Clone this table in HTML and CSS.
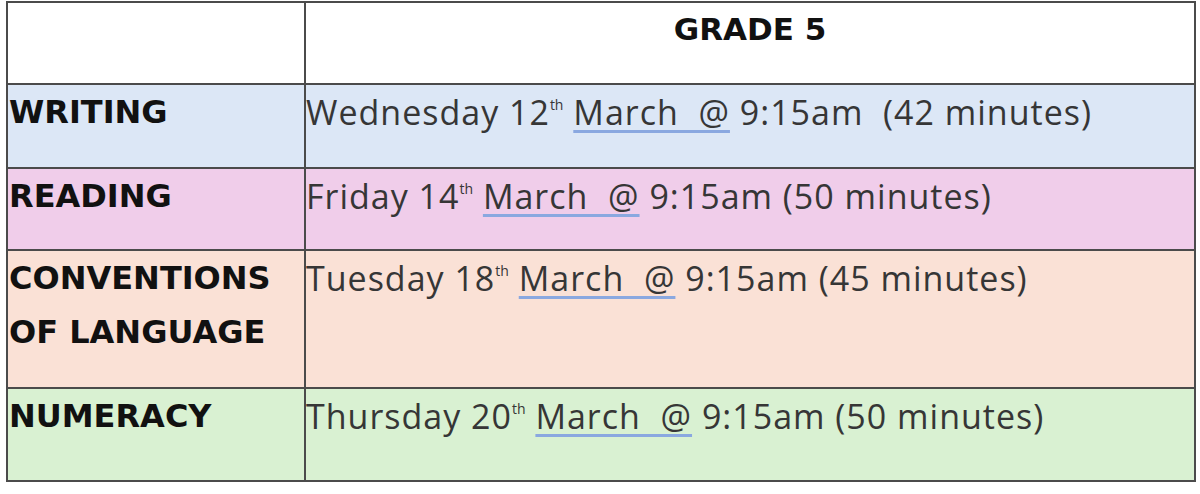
FILE: index.html
```html
<!DOCTYPE html>
<html>
<head>
<meta charset="utf-8">
<link rel="stylesheet" href="styles.css">
</head>
<body>
<table class="sched">
  <tr class="row-head">
    <td class="label"></td>
    <td class="grade">GRADE 5</td>
  </tr>
  <tr class="row-writing">
    <td class="label">WRITING</td>
    <td class="date">Wednesday 12<sup>th</sup> <span class="mark">March&nbsp; @</span> 9:15am&nbsp; (42 minutes)</td>
  </tr>
  <tr class="row-reading">
    <td class="label">READING</td>
    <td class="date">Friday 14<sup>th</sup> <span class="mark">March&nbsp; @</span> 9:15am (50 minutes)</td>
  </tr>
  <tr class="row-conv">
    <td class="label">CONVENTIONS OF LANGUAGE</td>
    <td class="date">Tuesday 18<sup>th</sup> <span class="mark">March&nbsp; @</span> 9:15am (45 minutes)</td>
  </tr>
  <tr class="row-num">
    <td class="label">NUMERACY</td>
    <td class="date">Thursday 20<sup>th</sup> <span class="mark">March&nbsp; @</span> 9:15am (50 minutes)</td>
  </tr>
</table>
</body>
</html>
```
FILE: styles.css
```css
html, body {
  margin: 0;
  padding: 0;
  background: #ffffff;
}
body {
  padding: 1px 4px 0 6px;
  font-family: "DejaVu Sans", sans-serif;
}
.sched {
  border-collapse: collapse;
  width: 1190px;
  table-layout: fixed;
}
.sched td {
  border: 2.5px solid #4b4b4b;
  vertical-align: top;
  padding: 0;
}
.sched td.label {
  width: 295px;
  font-weight: bold;
  font-size: 32px;
  color: #111;
  line-height: 54px;
  padding: 0 0 0 1px;
}
.sched td.grade {
  font-weight: bold;
  font-size: 31px;
  color: #111;
  text-align: center;
  line-height: 52px;
}
.sched td.date {
  font-family: "Open Sans", sans-serif;
  font-size: 34px;
  letter-spacing: 1px;
  color: #363636;
  line-height: 54px;
  padding-left: 0;
}
.date sup {
  font-size: 14px;
  letter-spacing: 0;
  vertical-align: top;
  line-height: 1;
  position: relative;
  top: 13px;
}
.mark {
  text-decoration: underline;
  text-decoration-color: #8aa8e0;
  text-decoration-thickness: 3px;
  text-underline-offset: 5px;
}
.row-head { height: 82px; }
.row-head td { background: #ffffff; }
.row-writing { height: 84px; }
.row-writing td { background: #dce7f6; }
.row-reading { height: 82px; }
.row-reading td { background: #f0cdea; }
.row-conv { height: 138px; }
.row-conv td { background: #fae1d6; }
.row-num { height: 93px; }
.row-num td { background: #d9f1d2; }
```
